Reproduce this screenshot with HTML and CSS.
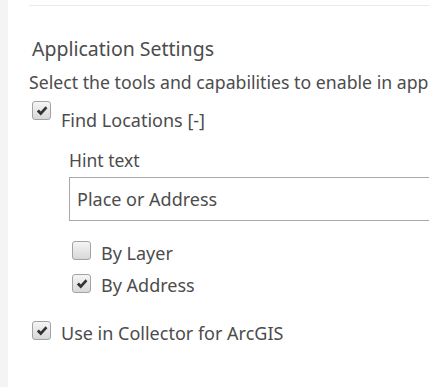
FILE: index.html
```html
<!DOCTYPE html>
<html lang="en">
<head>
    <meta charset="UTF-8">
    <title>Application Settings</title>
    <link rel="stylesheet" href="styles.css">
</head>
<body>
    <div class="sidebar"></div>
    <div class="panel">
        <div class="divider"></div>

        <h2 class="title">Application Settings</h2>
        <p class="intro">Select the tools and capabilities to enable in application</p>

        <label class="check-row first">
            <span class="box"><svg viewBox="0 0 12 12"><path d="M0.8 6.6 L2.9 4.6 L4.8 6.5 L9.6 1.2 L11.4 3.2 L4.8 10.4 Z" /></svg></span>
            <span>Find Locations <span class="toggle">[-]</span></span>
        </label>

        <div class="sub">
            <div class="field-label">Hint text</div>
            <div class="text-input">Place or Address</div>

            <label class="check-row layer">
                <span class="box"></span>
                <span>By Layer</span>
            </label>
            <label class="check-row address">
                <span class="box"><svg viewBox="0 0 12 12"><path d="M0.8 6.6 L2.9 4.6 L4.8 6.5 L9.6 1.2 L11.4 3.2 L4.8 10.4 Z" /></svg></span>
                <span>By Address</span>
            </label>
        </div>

        <label class="check-row last">
            <span class="box"><svg viewBox="0 0 12 12"><path d="M0.8 6.6 L2.9 4.6 L4.8 6.5 L9.6 1.2 L11.4 3.2 L4.8 10.4 Z" /></svg></span>
            <span>Use in Collector for ArcGIS</span>
        </label>
    </div>
</body>
</html>
```

FILE: styles.css
```css
html, body {
    margin: 0;
    height: 100%;
}

body {
    display: flex;
    font-family: "Noto Sans", sans-serif;
    color: #4c4c4c;
    background: #fff;
    overflow: hidden;
}

.sidebar {
    width: 8px;
    flex: none;
    background-color: #f4f4f4;
}

.panel {
    flex: 1;
    min-width: 0;
    padding-left: 21px;
    white-space: nowrap;
    overflow: hidden;
}

.divider {
    height: 1px;
    margin-top: 5px;
    background-color: #eaeaea;
}

.title {
    font-size: 19.5px;
    font-weight: normal;
    margin: 31px 0 0 3px;
    line-height: 24px;
}

.intro {
    font-size: 17.7px;
    margin: 10px 0 0;
    line-height: 22px;
}

.check-row {
    display: flex;
    align-items: flex-start;
    font-size: 18px;
    line-height: 24px;
    margin-left: 3px;
}

.box {
    width: 17px;
    height: 17px;
    border: 1px solid #a3a3a3;
    border-radius: 3px;
    background: linear-gradient(#f5f5f5, #d8d8d8);
    margin-right: 10px;
    margin-top: 0;
    flex: none;
    display: flex;
    align-items: center;
    justify-content: center;
}

.box svg {
    width: 12px;
    height: 12px;
    fill: #333;
}

.check-row.first {
    margin-top: 15px;
}

.check-row.first .box {
    margin-top: -7px;
}

.sub {
    margin-left: 40px;
    margin-top: 17px;
}

.field-label {
    font-size: 17.5px;
    line-height: 22px;
}

.text-input {
    margin-top: 6px;
    height: 42px;
    border: 1px solid #a8a8a8;
    border-right: none;
    font-size: 18px;
    line-height: 42px;
    padding-left: 7px;
}

.check-row.layer {
    margin-top: 20px;
}

.check-row.address {
    margin-top: 8px;
}

.check-row.address .box {
    margin-top: 1px;
}

.check-row.last {
    margin-top: 24px;
}
```
